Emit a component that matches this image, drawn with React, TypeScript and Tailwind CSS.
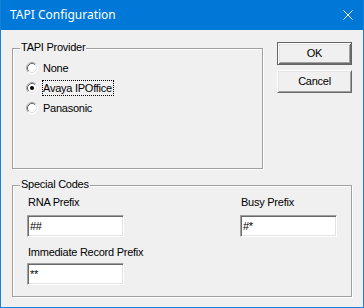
import React from "react";

function Radio({ checked }: { checked?: boolean }) {
  return (
    <svg width="12" height="12" viewBox="0 0 12 12" className="shrink-0">
      <circle cx="6" cy="6" r="4.2" fill="#ffffff" />
      <path d="M2.11 9.89 A5.5 5.5 0 0 1 9.89 2.11" fill="none" stroke="#a0a0a0" strokeWidth="1" />
      <path d="M9.89 2.11 A5.5 5.5 0 0 1 2.11 9.89" fill="none" stroke="#ffffff" strokeWidth="1" />
      <path d="M2.82 9.18 A4.5 4.5 0 0 1 9.18 2.82" fill="none" stroke="#696969" strokeWidth="1" />
      <path d="M9.18 2.82 A4.5 4.5 0 0 1 2.82 9.18" fill="none" stroke="#e3e3e3" strokeWidth="1" />
      {checked && <circle cx="6" cy="6" r="2" fill="#000000" />}
    </svg>
  );
}

function RadioRow({ label, checked, focused }: { label: string; checked?: boolean; focused?: boolean }) {
  return (
    <div className="flex items-center h-[20px] gap-[4px]">
      <Radio checked={checked} />
      <span
        className={
          focused
            ? "border border-dotted border-black leading-[14px] pr-px"
            : "border border-dotted border-transparent leading-[14px] pr-px"
        }
      >
        {label}
      </span>
    </div>
  );
}

function Field({ value, className }: { value: string; className?: string }) {
  return (
    <div
      className={
        "w-[97px] h-[22px] bg-white border border-t-[#a0a0a0] border-l-[#a0a0a0] border-b-white border-r-white shadow-[inset_1px_1px_0_#696969,inset_-1px_-1px_0_#e3e3e3] flex items-center pl-[2px] leading-[13px] " +
        (className ?? "")
      }
    >
      {value}
    </div>
  );
}

export default function App() {
  return (
    <div className="w-[364px] h-[308px] flex flex-col bg-[#f0f0f0] border-x border-b border-[#1a7fd6] font-['Liberation_Sans',Arial,sans-serif] text-[11px] text-black tracking-[-0.25px] select-none">
      <div className="h-[30px] shrink-0 bg-[#0078d7] flex items-center justify-between pl-[9px] pr-[10px]">
        <span className="font-['Noto_Sans',sans-serif] text-[12px] text-white tracking-normal leading-none">
          TAPI Configuration
        </span>
        <svg width="10" height="10" viewBox="0 0 10 10">
          <path d="M0.5 0.5 L9.5 9.5 M9.5 0.5 L0.5 9.5" stroke="#ffffff" strokeWidth="1" fill="none" />
        </svg>
      </div>

      <div className="flex flex-col pl-[11px]">
        <div className="flex items-start">
          <div className="relative mt-[18px] w-[251px] h-[121px] border border-[#a0a0a0] shadow-[inset_1px_1px_0_#fff,1px_1px_0_#fff] pl-[13px] pt-[9px] flex flex-col">
            <span className="absolute left-[7px] top-[-8px] px-px bg-[#f0f0f0] leading-[13px]">TAPI Provider</span>
            <RadioRow label="None" />
            <RadioRow label="Avaya IPOffice" checked focused />
            <RadioRow label="Panasonic" />
          </div>

          <div className="ml-[14px] mt-[12px] flex flex-col gap-[5px]">
            <button className="w-[75px] h-[23px] bg-[#f0f0f0] border border-[#646464] shadow-[inset_1px_1px_0_#ffffff,inset_-1px_-1px_0_#696969,inset_2px_2px_0_#e3e3e3,inset_-2px_-2px_0_#a0a0a0] flex items-center justify-center leading-[13px]">
              OK
            </button>
            <button className="w-[75px] h-[23px] bg-[#f0f0f0] border border-t-white border-l-white border-b-[#696969] border-r-[#696969] shadow-[inset_1px_1px_0_#e3e3e3,inset_-1px_-1px_0_#a0a0a0] flex items-center justify-center leading-[13px]">
              Cancel
            </button>
          </div>
        </div>

        <div className="relative mt-[16px] w-[340px] h-[112px] border border-[#a0a0a0] shadow-[inset_1px_1px_0_#fff,1px_1px_0_#fff] pl-[14px] pt-[10px] flex">
          <span className="absolute left-[7px] top-[-8px] px-px bg-[#f0f0f0] leading-[13px]">Special Codes</span>
          <div className="w-[213px] flex flex-col">
            <span className="pl-px leading-[13px]">RNA Prefix</span>
            <Field value="##" className="mt-[6px]" />
            <span className="pl-px leading-[13px] mt-[9px]">Immediate Record Prefix</span>
            <Field value="**" className="mt-[4px]" />
          </div>
          <div className="flex flex-col">
            <span className="pl-px leading-[13px]">Busy Prefix</span>
            <Field value="#*" className="mt-[6px]" />
          </div>
        </div>
      </div>
    </div>
  );
}
